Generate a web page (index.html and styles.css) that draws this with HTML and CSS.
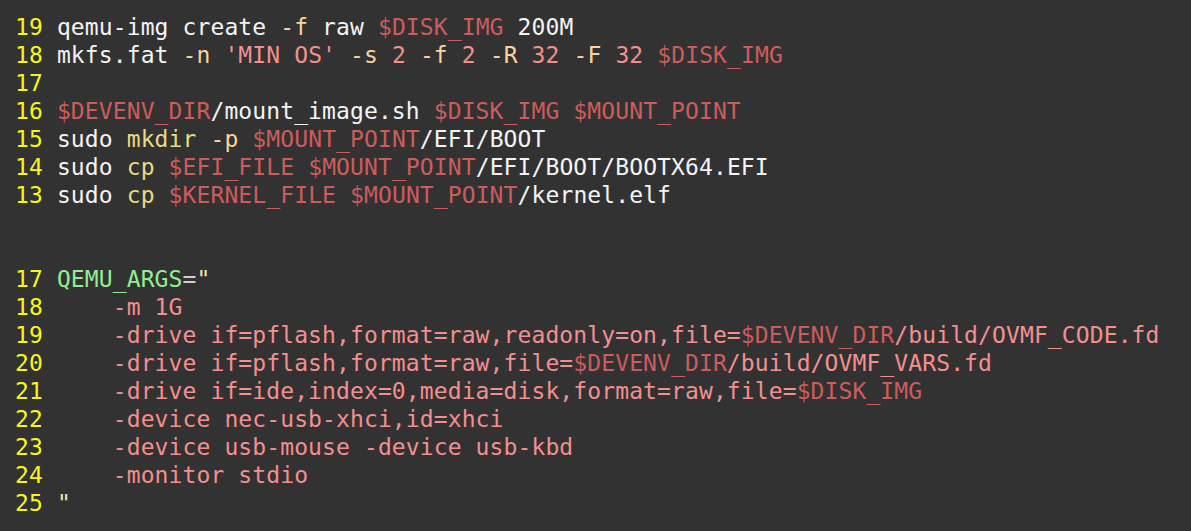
FILE: index.html
```html
<!DOCTYPE html>
<html lang="en">
<head>
<meta charset="utf-8">
<title>script</title>
<link rel="stylesheet" href="styles.css">
</head>
<body>
<div class="editor">
<div class="line"><span class="ln">19</span> <span class="tx">qemu-img create </span><span class="flag">-f</span><span class="tx"> raw </span><span class="var">$DISK_IMG</span><span class="tx"> 200M</span></div>
<div class="line"><span class="ln">18</span> <span class="tx">mkfs.fat </span><span class="flag">-n</span> <span class="str">'MIN OS'</span> <span class="flag">-s</span> <span class="str">2</span> <span class="flag">-f</span> <span class="str">2</span> <span class="flag">-R</span> <span class="str">32</span> <span class="flag">-F</span> <span class="str">32</span> <span class="var">$DISK_IMG</span></div>
<div class="line"><span class="ln">17</span></div>
<div class="line"><span class="ln">16</span> <span class="var">$DEVENV_DIR</span><span class="tx">/mount_image.sh </span><span class="var">$DISK_IMG</span> <span class="var">$MOUNT_POINT</span></div>
<div class="line"><span class="ln">15</span> <span class="tx">sudo </span><span class="cmd">mkdir</span> <span class="flag">-p</span> <span class="var">$MOUNT_POINT</span><span class="tx">/EFI/BOOT</span></div>
<div class="line"><span class="ln">14</span> <span class="tx">sudo </span><span class="cmd">cp</span> <span class="var">$EFI_FILE</span> <span class="var">$MOUNT_POINT</span><span class="tx">/EFI/BOOT/BOOTX64.EFI</span></div>
<div class="line"><span class="ln">13</span> <span class="tx">sudo </span><span class="cmd">cp</span> <span class="var">$KERNEL_FILE</span> <span class="var">$MOUNT_POINT</span><span class="tx">/kernel.elf</span></div>
<div class="line"> </div>
<div class="line"> </div>
<div class="line"><span class="ln">17</span> <span class="name">QEMU_ARGS</span><span class="eq">=</span><span class="quote">"</span></div>
<div class="line"><span class="ln">18</span> <span class="str">    -m 1G</span></div>
<div class="line"><span class="ln">19</span> <span class="str">    -drive if=pflash,format=raw,readonly=on,file=</span><span class="var">$DEVENV_DIR</span><span class="str">/build/OVMF_CODE.fd</span></div>
<div class="line"><span class="ln">20</span> <span class="str">    -drive if=pflash,format=raw,file=</span><span class="var">$DEVENV_DIR</span><span class="str">/build/OVMF_VARS.fd</span></div>
<div class="line"><span class="ln">21</span> <span class="str">    -drive if=ide,index=0,media=disk,format=raw,file=</span><span class="var">$DISK_IMG</span></div>
<div class="line"><span class="ln">22</span> <span class="str">    -device nec-usb-xhci,id=xhci</span></div>
<div class="line"><span class="ln">23</span> <span class="str">    -device usb-mouse -device usb-kbd</span></div>
<div class="line"><span class="ln">24</span> <span class="str">    -monitor stdio</span></div>
<div class="line"><span class="ln">25</span> <span class="quote">"</span></div>
</div>
</body>
</html>
```

FILE: styles.css
```css
html, body {
  margin: 0;
  padding: 0;
  background: #323232;
  height: 100%;
}

.editor {
  padding: 13px 0 0 15px;
  font-family: "DejaVu Sans Mono", "Liberation Mono", monospace;
  font-size: 23px;
  letter-spacing: 0.11px;
  line-height: 28px;
  color: #f4f4f4;
}

.line {
  white-space: pre;
  height: 28px;
}

.ln { color: #f6f61a; }
.tx { color: #f4f4f4; }
.var { color: #cd5c5c; }
.str { color: #f48f8f; }
.flag { color: #f9d49c; }
.cmd { color: #e8db82; }
.name { color: #92ee92; }
.eq { color: #cfcfcf; }
.quote { color: #eee6a8; }
```
